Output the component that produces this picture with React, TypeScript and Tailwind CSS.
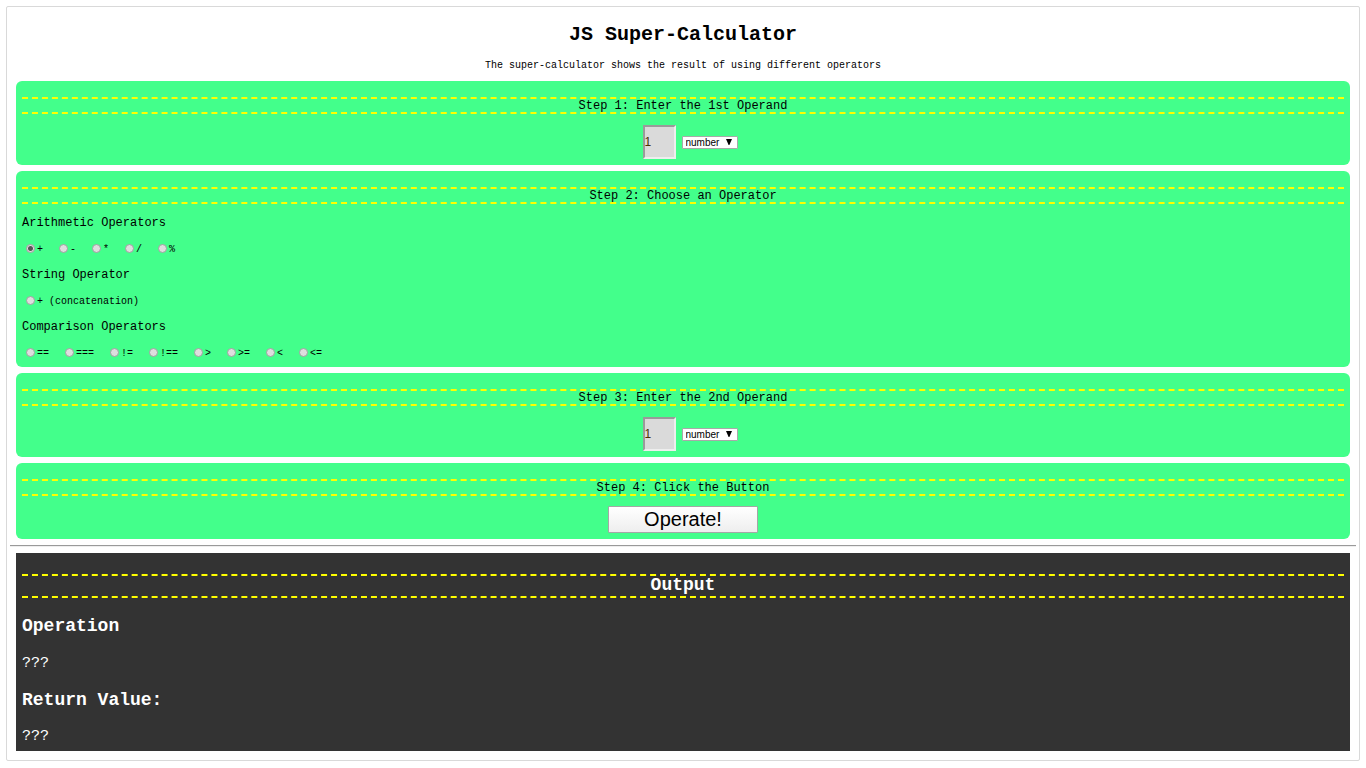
import { useState, type ReactNode } from "react";

type Operand = { value: string; type: string };

const groups = [
  { title: "Arithmetic Operators", operators: ["+", "-", "*", "/", "%"] },
  { title: "String Operator", operators: ["+ (concatenation)"] },
  {
    title: "Comparison Operators",
    operators: ["==", "===", "!=", "!==", ">", ">=", "<", "<="],
  },
];

function convert({ value, type }: Operand): any {
  if (type === "number") return Number(value);
  if (type === "boolean") return value !== "" && value !== "false";
  return value;
}

function calculate(a: any, operator: string, b: any): unknown {
  switch (operator) {
    case "+":
      return Number(a) + Number(b);
    case "-":
      return a - b;
    case "*":
      return a * b;
    case "/":
      return a / b;
    case "%":
      return a % b;
    case "==":
      return a == b;
    case "===":
      return a === b;
    case "!=":
      return a != b;
    case "!==":
      return a !== b;
    case ">":
      return a > b;
    case ">=":
      return a >= b;
    case "<":
      return a < b;
    case "<=":
      return a <= b;
    default:
      return String(a) + String(b);
  }
}

function Step({ title, children }: { title: string; children: ReactNode }) {
  return (
    <section className="mx-1.5 rounded-md bg-[#43ff8b] px-1.5 pt-4 pb-1.5">
      <h2 className="border-y-2 border-dashed border-[#ffff00] pt-px text-center text-[12px] leading-3">
        {title}
      </h2>
      {children}
    </section>
  );
}

function OperandFields({
  name,
  operand,
  onChange,
}: {
  name: string;
  operand: Operand;
  onChange: (operand: Operand) => void;
}) {
  return (
    <div className="mt-[11px] flex items-center justify-center gap-1.5 pl-3.5">
      <input
        type="text"
        aria-label={name}
        value={operand.value}
        onChange={(e) => onChange({ ...operand, value: e.target.value })}
        className="h-[34px] w-[33px] border-2 border-t-[#9a9a9a] border-r-[#eeeeee] border-b-[#eeeeee] border-l-[#9a9a9a] bg-[#dadada] font-['Liberation_Sans',sans-serif] text-[12px] text-[#4a3000]"
      />
      <div className="relative flex">
        <select
          aria-label={`${name} type`}
          value={operand.type}
          onChange={(e) => onChange({ ...operand, type: e.target.value })}
          className="h-[13px] w-14 appearance-none rounded-[1px] border border-[#a9a9a9] bg-white pl-[3px] font-['Liberation_Sans',sans-serif] text-[10px] leading-[11px]"
        >
          <option>number</option>
          <option>string</option>
          <option>boolean</option>
        </select>
        <svg
          viewBox="0 0 6 6"
          aria-hidden="true"
          className="pointer-events-none absolute top-[3px] right-1.5 size-1.5"
        >
          <path d="M0 0H6L3.4 6H2.6Z" />
        </svg>
      </div>
    </div>
  );
}

export default function App() {
  const [first, setFirst] = useState<Operand>({ value: "1", type: "number" });
  const [second, setSecond] = useState<Operand>({ value: "1", type: "number" });
  const [operator, setOperator] = useState("+");
  const [output, setOutput] = useState({ operation: "???", result: "???" });

  const operate = () => {
    const a = convert(first);
    const b = convert(second);
    const symbol = operator.split(" ")[0];
    setOutput({
      operation: `${JSON.stringify(a)} ${symbol} ${JSON.stringify(b)}`,
      result: String(calculate(a, operator, b)),
    });
  };

  return (
    <main className="m-1.5 rounded-xs border border-[#d9d9d9] px-[3px] pb-[9px] font-['Liberation_Mono',monospace] text-black">
      <header className="pt-4 pb-2 text-center">
        <h1 className="text-[20px] leading-6 font-bold">JS Super-Calculator</h1>
        <p className="mt-3 text-[10px] leading-[14px]">
          The super-calculator shows the result of using different operators
        </p>
      </header>

      <div className="flex flex-col gap-1.5">
        <Step title="Step 1: Enter the 1st Operand">
          <OperandFields name="1st operand" operand={first} onChange={setFirst} />
        </Step>

        <Step title="Step 2: Choose an Operator">
          <div className="flex flex-col gap-3.5 pt-[13px] pb-0.5">
            {groups.map((group) => (
              <fieldset key={group.title}>
                <legend className="mb-3 text-[12px] leading-[13px]">{group.title}</legend>
                <div className="flex gap-4 pl-1">
                  {group.operators.map((op) => (
                    <label key={op} className="flex items-center gap-0.5 text-[10px]">
                      <input
                        type="radio"
                        name="operator"
                        value={op}
                        checked={operator === op}
                        onChange={() => setOperator(op)}
                        className="size-[9px] appearance-none rounded-full border border-[#a0a0a0] bg-[#dedede] checked:bg-[radial-gradient(circle,#555555_0_2px,#dedede_3px)]"
                      />
                      <span className="pt-0.5 leading-[11px]">{op}</span>
                    </label>
                  ))}
                </div>
              </fieldset>
            ))}
          </div>
        </Step>

        <Step title="Step 3: Enter the 2nd Operand">
          <OperandFields name="2nd operand" operand={second} onChange={setSecond} />
        </Step>

        <Step title="Step 4: Click the Button">
          <div className="mt-2.5 flex justify-center">
            <button
              type="button"
              onClick={operate}
              className="w-[150px] rounded-[1px] border border-[#a6a6a6] bg-linear-to-b from-white to-[#eeeeee] font-['Liberation_Sans',sans-serif] text-[20px] leading-[25px]"
            >
              Operate!
            </button>
          </div>
        </Step>
      </div>

      <hr className="my-1.5 border-t border-b border-t-[#9a9a9a] border-b-[#eeeeee]" />

      <section className="mx-1.5 bg-[#333333] px-1.5 pt-[21px] pb-1.5 text-white">
        <h2 className="border-y-2 border-dashed border-[#ffff00] pb-0.5 text-center text-[18px] leading-[18px] font-bold">
          Output
        </h2>
        <h3 className="mt-[18px] text-[18px] leading-5 font-bold">Operation</h3>
        <p className="mt-[19px] text-[15px] leading-[18px]">{output.operation}</p>
        <h3 className="mt-[17px] text-[18px] leading-5 font-bold">Return Value:</h3>
        <p className="mt-[18px] text-[15px] leading-[17px]">{output.result}</p>
      </section>
    </main>
  );
}
